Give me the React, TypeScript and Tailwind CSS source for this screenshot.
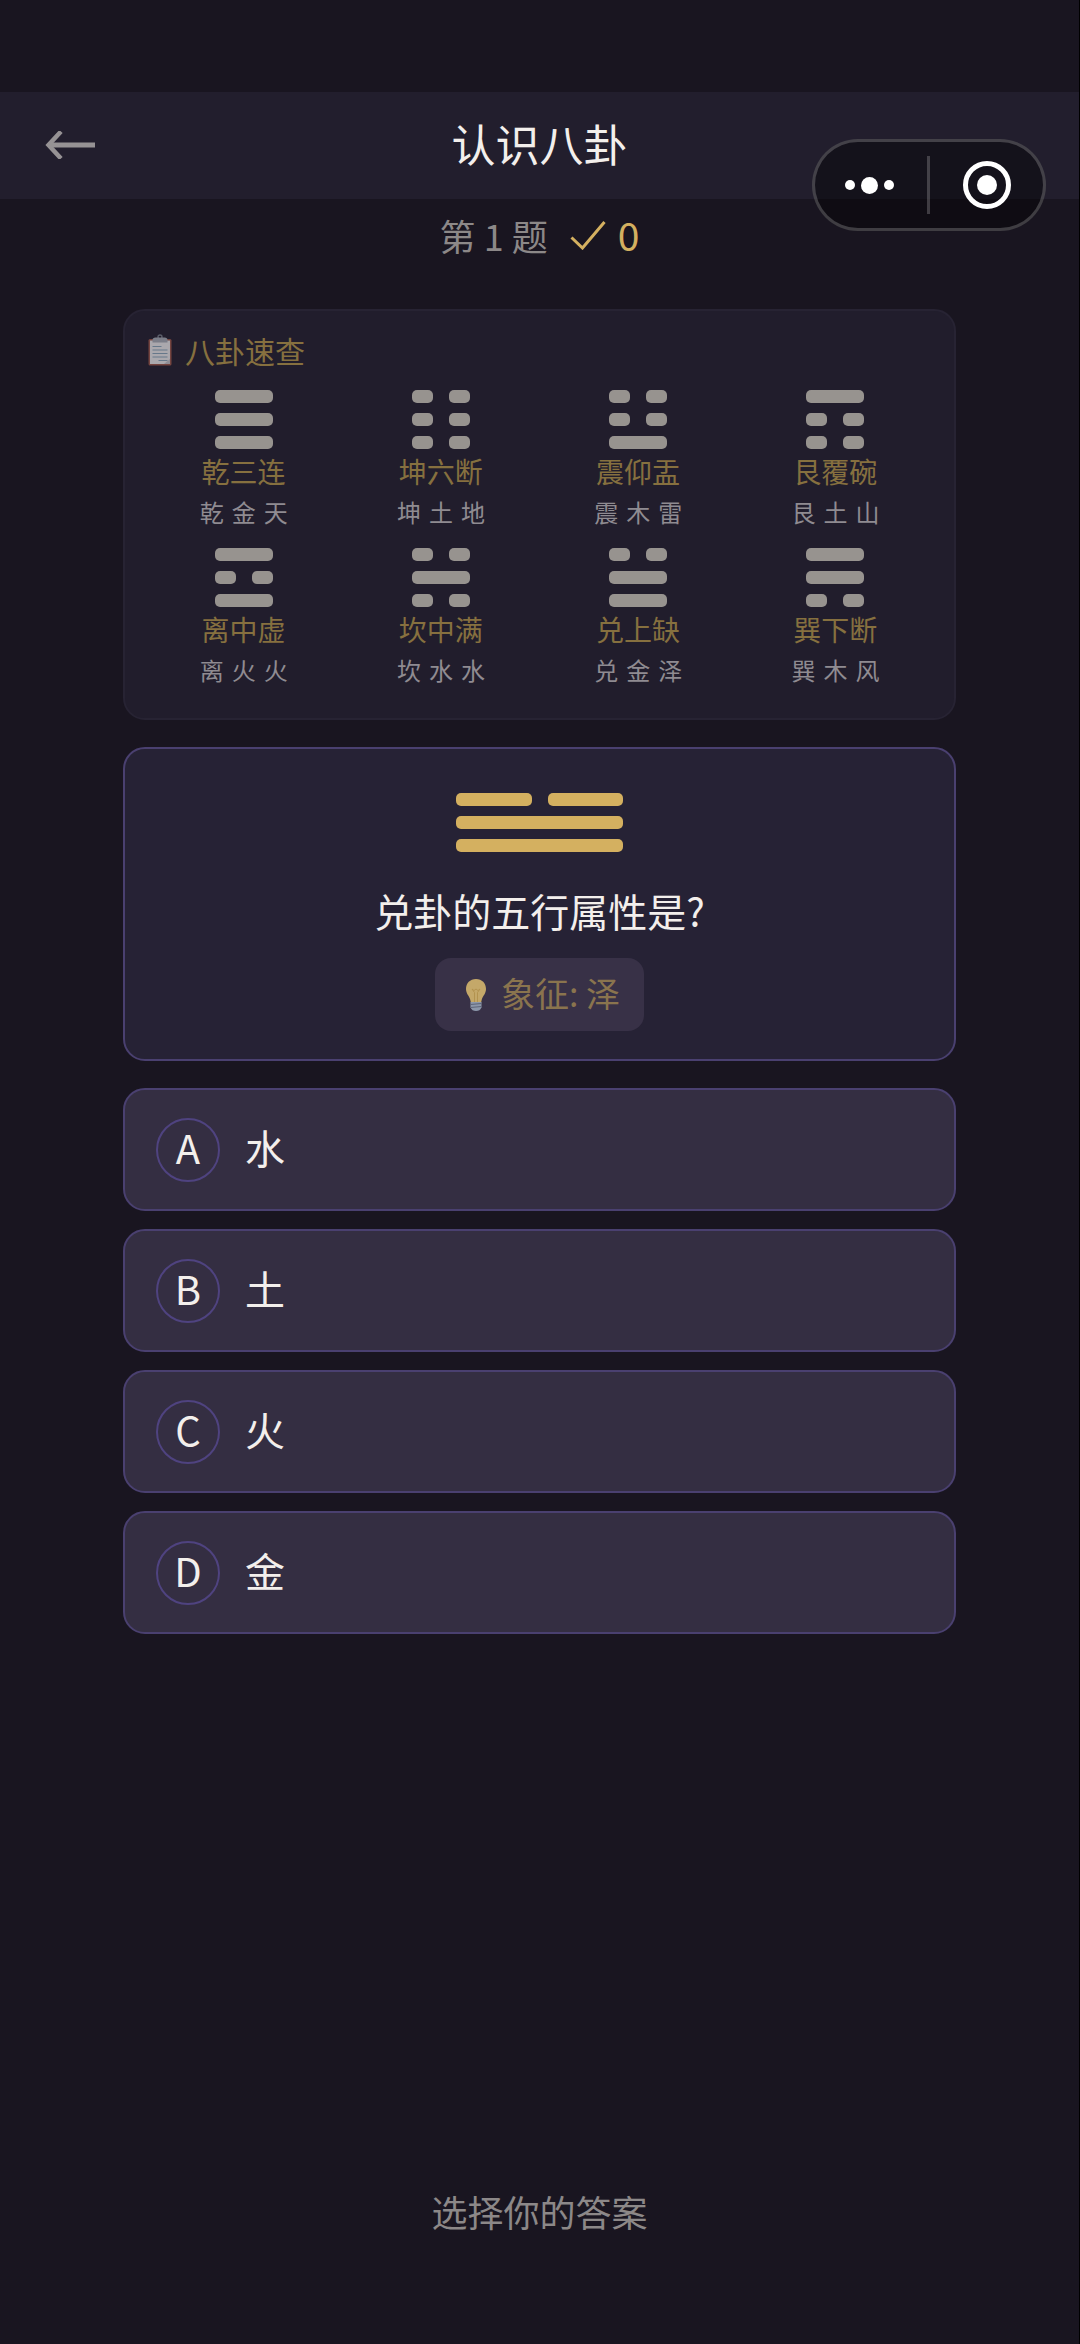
import React from 'react';

type Line = 0 | 1;

interface Trigram {
  symbol: string;
  rhyme: string;
  element: string;
  nature: string;
  // top line first, 1 = solid, 0 = broken
  lines: Line[];
}

const TRIGRAMS: Trigram[] = [
  { symbol: '乾', rhyme: '乾三连', element: '金', nature: '天', lines: [1, 1, 1] },
  { symbol: '坤', rhyme: '坤六断', element: '土', nature: '地', lines: [0, 0, 0] },
  { symbol: '震', rhyme: '震仰盂', element: '木', nature: '雷', lines: [0, 0, 1] },
  { symbol: '艮', rhyme: '艮覆碗', element: '土', nature: '山', lines: [1, 0, 0] },
  { symbol: '离', rhyme: '离中虚', element: '火', nature: '火', lines: [1, 0, 1] },
  { symbol: '坎', rhyme: '坎中满', element: '水', nature: '水', lines: [0, 1, 0] },
  { symbol: '兑', rhyme: '兑上缺', element: '金', nature: '泽', lines: [0, 1, 1] },
  { symbol: '巽', rhyme: '巽下断', element: '木', nature: '风', lines: [1, 1, 0] },
];

const OPTIONS = [
  { key: 'A', text: '水' },
  { key: 'B', text: '土' },
  { key: 'C', text: '火' },
  { key: 'D', text: '金' },
];

const TrigramLines: React.FC<{ lines: Line[]; width: string; color: string }> = ({ lines, width, color }) => (
  <div className={`flex flex-col gap-[10px] ${width}`}>
    {lines.map((line, i) => (
      <div key={i} className="flex gap-4">
        <span className={`h-[13px] flex-1 rounded-[5px] ${color}`} />
        {line === 0 && <span className={`h-[13px] flex-1 rounded-[5px] ${color}`} />}
      </div>
    ))}
  </div>
);

const ClipboardIcon = () => (
  <svg width="24" height="32" viewBox="0 0 24 32" aria-hidden="true">
    <rect x="0.5" y="5" width="23" height="26.5" rx="1.5" fill="#75443f" />
    <rect x="2" y="6.500" width="20" height="23.500" fill="#aaa8ad" />
    <path d="M22 25v5h-6z" fill="#8f8d95" />
    <circle cx="12" cy="3" r="2" fill="none" stroke="#5b5e6a" strokeWidth="1.4" />
    <path d="M4.5 8.500V6q0-2.500 3-2.500h9q3 0 3 2.500v2.500z" fill="#7b7d88" />
    <path d="M4.500 12.500h9M4.500 16h15M4.500 19.500h15M4.500 23h15M10.500 26.500h9" stroke="#66788a" strokeWidth="1" />
  </svg>
);

const BulbIcon = () => (
  <svg width="22" height="34" viewBox="0 0 22 34" aria-hidden="true">
    <path d="M11 1C5 1 1 5.200 1 11c0 4.500 3.200 7 4.200 10.500L6 25h10l.8-3.500C17.800 18 21 15.500 21 11c0-5.800-4-10-10-10z" fill="#c4a869" />
    <path d="M7 11l2.500 3.500V24M15 11l-2.500 3.500V24M7 11q2 3 4 0q2 3 4 0" fill="none" stroke="#b3934f" strokeWidth="1" />
    <path d="M5.500 24h11v5.500q-1.500 3.500-5.500 3.500t-5.500-3.500z" fill="#8c97aa" />
    <path d="M5.500 26.500l11-1M5.500 29.500l11-1" stroke="#5d6478" strokeWidth="1" />
  </svg>
);

const Capsule = () => (
  <div className="absolute top-[139px] right-[33px] flex h-[92px] w-[234px] items-center rounded-full border-[3px] border-white/20 bg-black/40">
    <button aria-label="更多" className="flex w-28 items-center justify-center gap-[6px] pr-1">
      <span className="size-[10px] rounded-full bg-white" />
      <span className="size-[17px] rounded-full bg-white" />
      <span className="size-[10px] rounded-full bg-white" />
    </button>
    <span className="h-[58px] w-[3px] bg-white/20" />
    <button aria-label="关闭" className="flex flex-1 items-center justify-center">
      <span className="flex size-12 items-center justify-center rounded-full border-[5px] border-white">
        <span className="size-5 rounded-full bg-white" />
      </span>
    </button>
  </div>
);

export default function App() {
  return (
    <div className="relative flex min-h-screen flex-col border-r border-black bg-[#191520] pt-[92px] font-['Noto_Sans_CJK_SC',sans-serif] text-[#f3efec]">
      <header className="grid h-[107px] grid-cols-[1fr_auto_1fr] items-center bg-[#221e2d] px-[45px] pb-0.5">
        <button aria-label="返回" className="justify-self-start">
          <svg width="50" height="28" viewBox="0 0 50 28" fill="none" stroke="#969294" strokeWidth="5" aria-hidden="true">
            <path d="M3 14h47" />
            <path d="M16 0.500L3.500 14L16 27.500" strokeWidth="4.500" />
          </svg>
        </button>
        <h1 className="pb-1 text-[44px] leading-[60px]">认识八卦</h1>
      </header>

      <Capsule />

      <div className="flex items-center justify-center gap-[22px] pt-2 pb-[46px] text-[36px] leading-[54px] text-[#8c8888]">
        <span>第 1 题</span>
        <span className="flex items-center gap-3 text-[#d4b060]">
          <svg width="36" height="30" viewBox="0 0 36 30" fill="none" stroke="currentColor" strokeWidth="3" aria-hidden="true">
            <path d="M1.500 17.500L12.500 28L34.500 2" />
          </svg>
          <span className="pb-0.5 text-[39px]">0</span>
        </span>
      </div>

      <main className="flex flex-col gap-[27px] px-[123px]">
        <section className="rounded-[22px] border-2 border-[#272333] bg-[#211d2c] px-5 pt-[18px] pb-[29px]">
          <h2 className="flex items-center gap-[13px] pl-[3px] text-[30px] leading-[42px] text-[#86703f]">
            <ClipboardIcon />
            八卦速查
          </h2>
          <ul className="mt-[19px] grid grid-cols-4 gap-y-[17px]">
            {TRIGRAMS.map((t) => (
              <li key={t.symbol} className="flex flex-col items-center">
                <TrigramLines lines={t.lines} width="w-[58px]" color="bg-[#97938f]" />
                <span className="text-[28px] leading-[44px] text-[#86703f]">{t.rhyme}</span>
                <span className="flex gap-2 text-[24px] leading-[38px] text-[#8f8b91]">
                  <span>{t.symbol}</span>
                  <span>{t.element}</span>
                  <span>{t.nature}</span>
                </span>
              </li>
            ))}
          </ul>
        </section>

        <section className="flex flex-col items-center rounded-[22px] border-2 border-[#4a4070] bg-[#262235] pt-11 pb-[28px]">
          <TrigramLines lines={[0, 1, 1]} width="w-[167px]" color="bg-[#d4b060]" />
          <p className="mt-[28px] text-[39px] leading-[60px]">兑卦的五行属性是?</p>
          <p className="mt-[18px] flex h-[73px] items-center gap-[14px] rounded-[16px] bg-[#383147] pr-6 pl-[30px] text-[34px] leading-[48px] text-[#8a744e]">
            <BulbIcon />
            <span className="pb-1">象征: 泽</span>
          </p>
        </section>

        <div className="flex flex-col gap-[18px]">
          {OPTIONS.map((o) => (
            <button
              key={o.key}
              className="flex h-[123px] items-center gap-[25px] rounded-[22px] border-2 border-[#4a4070] bg-[#342e42] px-[31px] text-left text-[40px] leading-[56px]"
            >
              <span className="flex size-16 items-center justify-center rounded-full border-2 border-[#4f4380]">
                <span className="pb-1.5">{o.key}</span>
              </span>
              <span className="pb-1.5">{o.text}</span>
            </button>
          ))}
        </div>
      </main>

      <footer className="mt-auto pb-[106px] text-center text-[36px] leading-[54px] text-[#8c8888]">选择你的答案</footer>
    </div>
  );
}
